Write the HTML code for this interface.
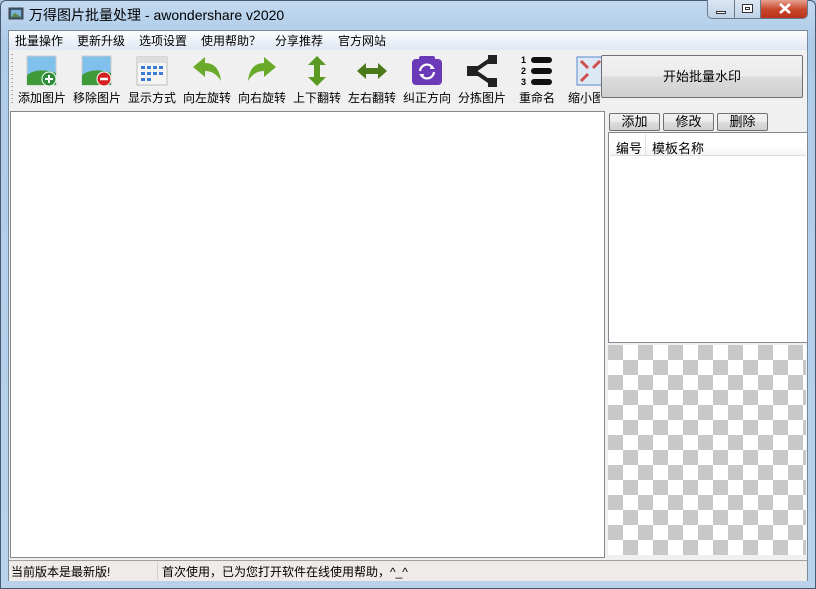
<!DOCTYPE html><html><head><meta charset="utf-8"><style>
*{box-sizing:border-box;margin:0;padding:0}
body{width:816px;height:589px;position:relative;overflow:hidden;font-family:"Liberation Sans","Noto Sans CJK SC",sans-serif;font-size:12px;color:#000;background:#a9c7e6}
.a{position:absolute}
.lbl{position:absolute;top:89px;width:60px;text-align:center;font-size:12px;white-space:nowrap}
.ic{position:absolute;top:55px;width:32px;height:32px}
.btn{position:absolute;border:1px solid #707070;border-radius:2px;background:linear-gradient(#f2f2f2,#ebebeb 50%,#dddddd 50%,#cfcfcf);text-align:center;font-size:13px}
</style></head><body>
<div class="a" style="left:0;top:0;width:816px;height:589px;background:linear-gradient(#c2d9f0,#aecbe9 40px,#b9d2ec);border:1px solid #4a5a6e;border-radius:6px 6px 0 0"></div>
<svg class="a" style="left:8px;top:6px" width="16" height="16"><rect x="1" y="2" width="14" height="11" fill="#3a5a7a" stroke="#444"/><rect x="3" y="4" width="10" height="7" fill="#7fb0d8"/><path d="M3 11 L7 7 L13 11Z" fill="#5a8a3a"/></svg>
<div class="a" style="left:29px;top:5px;font-size:14px;color:#000">万得图片批量处理 - awondershare v2020</div>
<div class="a" style="left:707px;top:0;width:101px;height:19px;border:1px solid #6a7a8e;border-top:none;border-radius:0 0 5px 5px;background:linear-gradient(#dbe6f3,#c1d3e8);overflow:hidden">
<div class="a" style="left:26px;top:0;width:1px;height:19px;background:#6a7a8e"></div><div class="a" style="left:52px;top:0;width:1px;height:19px;background:#6a7a8e"></div>
<div class="a" style="left:53px;top:0;width:48px;height:19px;background:linear-gradient(#e8a290,#c8462c 50%,#b8301a)"></div>
<div class="a" style="left:8px;top:11px;width:10px;height:3px;background:#fff;border:1px solid #333"></div>
<div class="a" style="left:34px;top:4px;width:11px;height:9px;border:1px solid #333;background:#fff"></div><div class="a" style="left:37px;top:7px;width:5px;height:3px;border:1px solid #333"></div>
<svg class="a" style="left:71px;top:3px" width="12" height="11"><path d="M1 1 L11 10 M11 1 L1 10" stroke="#fff" stroke-width="2.6"/></svg></div>
<div class="a" style="left:8px;top:30px;width:800px;height:551px;background:#f0f0f0;border:1px solid #7a8a9e"></div>
<div class="a" style="left:9px;top:31px;width:798px;height:19px;background:linear-gradient(#fdfdfe,#dfe7f3)"></div>
<div class="a" style="left:15px;top:32px">批量操作</div>
<div class="a" style="left:77px;top:32px">更新升级</div>
<div class="a" style="left:139px;top:32px">选项设置</div>
<div class="a" style="left:201px;top:32px">使用帮助？</div>
<div class="a" style="left:275px;top:32px">分享推荐</div>
<div class="a" style="left:338px;top:32px">官方网站</div>
<div class="a" style="left:11px;top:54px;width:2px;height:52px;background:repeating-linear-gradient(#aaa 0 1px,transparent 1px 4px)"></div>
<svg class="ic" style="left:26px"><rect x="1" y="1" width="29" height="29" fill="#7fc0ec" stroke="#ccc"/><path d="M1 20 Q12 12 30 18 L30 30 L1 30Z" fill="#3f9a3a"/><circle cx="23" cy="24" r="7" fill="#2e8c3a" stroke="#fff"/><path d="M23 20v8M19 24h8" stroke="#fff" stroke-width="2"/></svg>
<svg class="ic" style="left:81px"><rect x="1" y="1" width="29" height="29" fill="#7fc0ec" stroke="#ccc"/><path d="M1 20 Q12 12 30 18 L30 30 L1 30Z" fill="#3f9a3a"/><circle cx="23" cy="24" r="7" fill="#d42020" stroke="#fff"/><path d="M19 24h8" stroke="#fff" stroke-width="2.5"/></svg>
<svg class="ic" style="left:136px"><rect x="1" y="2" width="30" height="28" fill="#f4f4f4" stroke="#bbb"/><rect x="1" y="2" width="30" height="6" fill="#ddd"/><g fill="#3a7ad8"><rect x="5" y="11" width="4" height="3"/><rect x="11" y="11" width="4" height="3"/><rect x="17" y="11" width="4" height="3"/><rect x="23" y="11" width="4" height="3"/><rect x="5" y="17" width="4" height="3"/><rect x="11" y="17" width="4" height="3"/><rect x="17" y="17" width="4" height="3"/><rect x="23" y="17" width="4" height="3"/><rect x="5" y="23" width="4" height="3"/><rect x="11" y="23" width="4" height="3"/></g></svg>
<svg class="ic" style="left:191px"><path d="M2 12 L14 2 L14 8 Q28 8 30 26 Q24 16 14 16 L14 22Z" fill="#6aaa2a"/></svg>
<svg class="ic" style="left:246px"><path d="M30 12 L18 2 L18 8 Q4 8 2 26 Q8 16 18 16 L18 22Z" fill="#6aaa2a"/></svg>
<svg class="ic" style="left:301px"><path d="M16 1 L25 10 L19 10 L19 22 L25 22 L16 31 L7 22 L13 22 L13 10 L7 10Z" fill="#5a9a22"/></svg>
<svg class="ic" style="left:356px"><path d="M1 16 L10 8 L10 13 L22 13 L22 8 L31 16 L22 24 L22 19 L10 19 L10 24Z" fill="#4a7a1a"/></svg>
<svg class="ic" style="left:411px"><rect x="1" y="4" width="30" height="26" rx="4" fill="#6a3ab8"/><rect x="8" y="1" width="16" height="5" rx="2" fill="#6a3ab8"/><path d="M9 16 A7 7 0 0 1 22 13 M23 17 A7 7 0 0 1 10 20" stroke="#fff" stroke-width="2.2" fill="none"/><path d="M20 10 L24 14 L19 14Z M12 23 L8 19 L13 19Z" fill="#fff"/></svg>
<svg class="ic" style="left:466px"><path d="M8 16 L24 5 M8 16 L24 27" stroke="#222" stroke-width="4"/><rect x="1" y="11" width="11" height="10" fill="#222"/><rect x="22" y="0" width="9" height="9" fill="#222"/><rect x="22" y="23" width="9" height="9" fill="#222"/></svg>
<svg class="ic" style="left:521px"><g font-size="9" font-weight="bold" font-family="Liberation Sans"><text x="0" y="8">1</text><text x="0" y="19">2</text><text x="0" y="30">3</text></g><g fill="#111"><rect x="10" y="2" width="21" height="6" rx="3"/><rect x="10" y="13" width="21" height="6" rx="3"/><rect x="10" y="24" width="21" height="6" rx="3"/></g></svg>
<svg class="ic" style="left:576px;width:26px"><rect x="1" y="2" width="30" height="28" fill="#dde8f5" stroke="#5a8ad0"/><path d="M5 6 L12 13 M24 6 L17 13 M5 26 L12 19" stroke="#d05050" stroke-width="3"/></svg>
<div class="lbl" style="left:12px">添加图片</div><div class="lbl" style="left:67px">移除图片</div><div class="lbl" style="left:122px">显示方式</div><div class="lbl" style="left:177px">向左旋转</div><div class="lbl" style="left:232px">向右旋转</div><div class="lbl" style="left:287px">上下翻转</div><div class="lbl" style="left:342px">左右翻转</div><div class="lbl" style="left:397px">纠正方向</div><div class="lbl" style="left:452px">分拣图片</div><div class="lbl" style="left:507px">重命名</div>
<div class="a" style="left:568px;top:89px;width:32px;overflow:hidden;white-space:nowrap">缩小图</div>
<div class="a" style="left:10px;top:111px;width:595px;height:447px;background:#fff;border:1px solid #828790"></div>
<div class="btn" style="left:601px;top:55px;width:202px;height:43px;line-height:41px">开始批量水印</div>
<div class="btn" style="left:609px;top:113px;width:51px;height:18px;line-height:16px">添加</div>
<div class="btn" style="left:663px;top:113px;width:51px;height:18px;line-height:16px">修改</div>
<div class="btn" style="left:717px;top:113px;width:51px;height:18px;line-height:16px">删除</div>
<div class="a" style="left:608px;top:132px;width:200px;height:211px;background:#fff;border:1px solid #828790"></div>
<div class="a" style="left:610px;top:134px;width:196px;height:22px;background:linear-gradient(#fff,#fff 50%,#f3f4f6);border-bottom:1px solid #dcdcdc"></div>
<div class="a" style="left:645px;top:134px;width:1px;height:22px;background:#e0e0e0"></div>
<div class="a" style="left:616px;top:138px;font-size:13px">编号</div>
<div class="a" style="left:652px;top:138px;font-size:13px">模板名称</div>
<div class="a" style="left:608px;top:345px;width:198px;height:210px;background:conic-gradient(#c8c8c8 25%,#fff 0 50%,#c8c8c8 0 75%,#fff 0);background-size:30px 30px;background-position:15px 0"></div>
<div class="a" style="left:9px;top:560px;width:798px;height:21px;background:#efebe9;border-top:1px solid #a0a0a0"></div>
<div class="a" style="left:157px;top:562px;width:1px;height:18px;background:#d0d0d0"></div>
<div class="a" style="left:11px;top:563px">当前版本是最新版!</div>
<div class="a" style="left:162px;top:563px">首次使用，已为您打开软件在线使用帮助，^_^</div>
</body></html>
